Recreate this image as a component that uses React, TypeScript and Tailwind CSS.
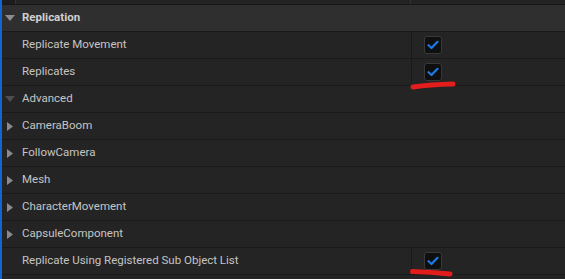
import React from 'react';

type Row = {
  label: string;
  kind: 'check' | 'tree' | 'group';
};

const rows: Row[] = [
  { label: 'Replicate Movement', kind: 'check' },
  { label: 'Replicates', kind: 'check' },
  { label: 'Advanced', kind: 'group' },
  { label: 'CameraBoom', kind: 'tree' },
  { label: 'FollowCamera', kind: 'tree' },
  { label: 'Mesh', kind: 'tree' },
  { label: 'CharacterMovement', kind: 'tree' },
  { label: 'CapsuleComponent', kind: 'tree' },
  { label: 'Replicate Using Registered Sub Object List', kind: 'check' },
];

function DownArrow({ color }: { color: string }) {
  return (
    <svg width="10" height="6" viewBox="0 0 10 6" className="ml-[3px]">
      <polygon points="0,0 10,0 5,6" fill={color} />
    </svg>
  );
}

function RightArrow() {
  return (
    <svg width="6" height="9" viewBox="0 0 6 9" className="ml-[5px]">
      <polygon points="0,0 6,4.5 0,9" fill="#8a8a8a" />
    </svg>
  );
}

function Checkbox() {
  return (
    <div className="w-[18px] h-[18px] rounded-[3px] bg-[#0f0f0f] border border-[#383838] flex items-center justify-center">
      <svg width="12" height="10" viewBox="0 0 12 10">
        <path d="M1.5 5.2 L4.5 8 L10.5 1.8" fill="none" stroke="#1d7ae3" strokeWidth="2.2" strokeLinecap="round" strokeLinejoin="round" />
      </svg>
    </div>
  );
}

export default function App() {
  return (
    <div
      className="relative w-[565px] h-[279px] overflow-hidden bg-[#242424] border-l-2 border-[#1167d1] text-[11.5px] text-[#c4c4c4]"
      style={{ fontFamily: 'Roboto, "Liberation Sans", sans-serif' }}
    >
      {/* partial row above */}
      <div className="flex h-[5px] border-b border-[#171717]">
        <div className="w-[14px] bg-[#1c1c1c] border-r border-[#333333]" />
        <div className="w-[394px] bg-[#232323]" />
        <div className="flex-1 bg-[#232323] border-l border-[#333333]" />
      </div>

      {/* category header */}
      <div className="flex items-center h-[27px] bg-[#2f2f2f] border-b border-[#1a1a1a]">
        <div className="w-[20px] flex items-center">
          <DownArrow color="#8c8c8c" />
        </div>
        <span className="font-bold text-[#d0d0d0]">Replication</span>
      </div>

      {rows.map((r) => (
        <div key={r.label} className="flex h-[27px] border-b border-[#1a1a1a]">
          <div className="w-[409px] flex items-center">
            <div className="w-[20px] flex items-center">
              {r.kind === 'group' && <DownArrow color="#4e4e4e" />}
              {r.kind === 'tree' && <RightArrow />}
            </div>
            <span>{r.label}</span>
          </div>
          {r.kind === 'check' && (
            <div className="flex-1 flex items-center pl-[12px] border-l border-[#1a1a1a]">
              <Checkbox />
            </div>
          )}
        </div>
      ))}

      {/* red marker strokes */}
      <svg className="absolute left-[-2px] top-0 pointer-events-none" width="565" height="279">
        <path d="M413 87 Q430 84.5 453 84" fill="none" stroke="#e31c1c" strokeWidth="5" strokeLinecap="round" />
        <path d="M412.5 271.5 Q430 272 450 274" fill="none" stroke="#e31c1c" strokeWidth="5" strokeLinecap="round" />
      </svg>
    </div>
  );
}
